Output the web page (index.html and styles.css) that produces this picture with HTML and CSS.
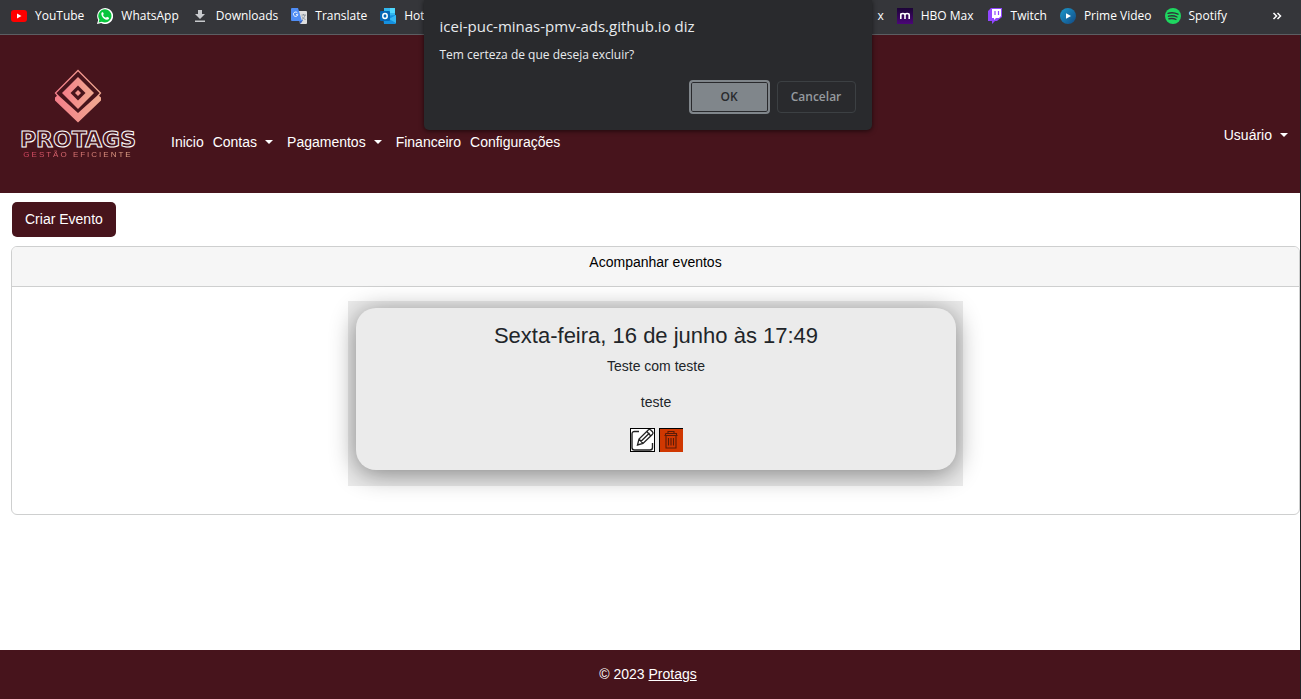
FILE: index.html
```html
<!DOCTYPE html>
<html lang="pt-BR">
<head>
<meta charset="utf-8">
<title>Protags</title>
<link rel="stylesheet" href="styles.css">
</head>
<body>
<div class="bookmarks">
  <div class="bookmark-group">
    <a class="bookmark" href="#"><svg viewBox="0 0 16 16"><rect y="2" width="16" height="12" rx="3" fill="#f00"/><path d="M6 5.500v5L10.500 8z" fill="#fff"/></svg>YouTube</a>
    <a class="bookmark" href="#"><svg viewBox="0 0 16 16"><path d="M0 16l1.200-4A8 8 0 1 1 4.200 15z" fill="#fff"/><path d="M1.600 14.500l.8-2.900A6.600 6.600 0 1 1 4.900 13.800z" fill="#08c53c"/><path d="M5 4.200c-2 1.500.8 7.200 5 7.500 1.300 0 2.300-1 2-2L10 8.700 9 9.800C7.500 9.200 6.600 8.300 6 7l.8-1L6 4.200z" fill="#fff"/></svg>WhatsApp</a>
    <a class="bookmark" href="#"><svg viewBox="0 0 16 16"><path d="M6 2h4v4h3l-5 5-5-5h3zM3 12.500h10V14H3z" fill="#c7c9cc"/></svg>Downloads</a>
    <a class="bookmark" href="#"><svg viewBox="0 0 16 16"><path d="M7 3h8a1 1 0 0 1 1 1v11a1 1 0 0 1-1 1H9z" fill="#dedede"/><path d="M8 12h4l-2.500 4z" fill="#3a62bd"/><path d="M1 0h6l4 13H1a1 1 0 0 1-1-1V1a1 1 0 0 1 1-1z" fill="#4f8df5"/><path d="M6.500 5A2.200 2.200 0 1 0 6.800 6.700H5" fill="none" stroke="#fff"/><path d="M10.500 7h4.500M12.500 6v1M14 7c-.5 2-1.500 3.500-3 4.500M11 8.500c1 1.500 2 2.500 3.500 3" fill="none" stroke="#7b8791" stroke-width=".8"/></svg>Translate</a>
    <a class="bookmark" href="#"><svg viewBox="0 0 16 16"><path d="M4 0h11v8H4z" fill="#32b7ee"/><path d="M10 0h5v5h-5z" fill="#50d9ff"/><path d="M3 8l13-1v8a1 1 0 0 1-1 1H4z" fill="#1490df"/><path d="M16 7v8l-7-4z" fill="#35b8f1"/><rect y="3" width="10" height="10" rx="1" fill="#0567b5"/><ellipse cx="5" cy="8" rx="2.200" ry="2.500" fill="none" stroke="#fff" stroke-width="1.500"/></svg>Hot</a>
  </div>
  <div class="bookmark-group">
    <a class="bookmark" href="#">x</a>
    <a class="bookmark" href="#"><svg viewBox="0 0 16 16"><defs><linearGradient id="hbo" x2="0" y2="1"><stop stop-color="#1c0437"/><stop offset="1" stop-color="#4b0678"/></linearGradient></defs><path d="M0 0h16v16H0z" fill="url(#hbo)"/><path d="M3.800 11V5.500M3.800 7c0-2 4.200-2 4.200 0v4M8 7c0-2 4.200-2 4.200 0v4" fill="none" stroke="#fff" stroke-width="1.600"/></svg>HBO Max</a>
    <a class="bookmark" href="#"><svg viewBox="0 0 16 16"><path d="M4 0h11v9l-5 4H8l-3 3v-3H1V3z" fill="#9146ff"/><path d="M5 1h9v7l-2 2H9l-2 2v-2H5z" fill="#fff"/><path d="M8 3v4M11.500 3v4" stroke="#9146ff" stroke-width="1.200"/></svg>Twitch</a>
    <a class="bookmark" href="#"><svg viewBox="0 0 16 16"><defs><linearGradient id="prime" x2="1" y2="1"><stop stop-color="#1b9ace"/><stop offset="1" stop-color="#134a83"/></linearGradient></defs><circle cx="8" cy="8" r="8" fill="url(#prime)"/><path d="M6 5.200v5.600L11 8z" fill="#fff"/></svg>Prime Video</a>
    <a class="bookmark" href="#"><svg viewBox="0 0 16 16"><circle cx="8" cy="8" r="8" fill="#1ed760"/><path d="M3 5.400q5-1.600 10 .8M3.500 8.200q4.500-1.300 8.500.8M4 10.800q4-1 7 .7" fill="none" stroke="#303438" stroke-width="1.400" stroke-linecap="round"/></svg>Spotify</a>
    <button class="more" type="button" aria-label="Mais favoritos"><svg viewBox="0 0 10 10"><path d="M1.500 2l3 3-3 3M5.500 2l3 3-3 3" fill="none" stroke="#fff" stroke-width="1.500"/></svg></button>
  </div>
</div>

<div class="page">
  <header class="navbar">
    <a class="logo" href="#">
      <svg class="logo-mark" viewBox="0 0 48 54"><defs><linearGradient id="rose" x2="1" y2="0"><stop stop-color="#f47d89"/><stop offset="1" stop-color="#f0aa91"/></linearGradient></defs><path d="M4 27L1.500 24 24 1.500 46.500 24 44 27" fill="none" stroke="url(#rose)" stroke-width="1.300"/><path d="M24 8L40 24 24 40 8 24z" fill="url(#rose)"/><path d="M24 16.500L31.500 24 24 31.500 16.500 24z" fill="#47141c"/><path d="M24 21L27 24 24 27 21 24z" fill="#f2948d"/><path d="M1 28.500l3-2.500 20 18 20-18 3 2.500v3L24 53.500 1 31.500z" fill="url(#rose)"/></svg>
      <span class="logo-name">PROTAGS</span>
      <span class="logo-tag">GESTÃO EFICIENTE</span>
    </a>
    <nav class="menu">
      <a href="#">Inicio</a>
      <button class="dropdown" type="button">Contas</button>
      <button class="dropdown" type="button">Pagamentos</button>
      <a href="#">Financeiro</a>
      <a href="#">Configurações</a>
    </nav>
    <button class="dropdown user" type="button">Usuário</button>
  </header>

  <main class="content">
    <button class="create" type="button">Criar Evento</button>
    <section class="card">
      <h1 class="card-header">Acompanhar eventos</h1>
      <div class="card-body">
        <div class="event-frame">
          <article class="event">
            <h2>Sexta-feira, 16 de junho às 17:49</h2>
            <p>Teste com teste</p>
            <p>teste</p>
            <div class="actions">
              <button class="edit" type="button" aria-label="Editar"><svg viewBox="0 0 23 22"><path d="M8 2.500H3.500Q1 2.500 1 5v13.500Q1 21 3.500 21h15.500q2.500 0 2.500-2.500V14" fill="none" stroke="#222" stroke-width="1.400"/><path d="M6.500 16l1.500-6L17.500.800q1-.8 2.200.2l1.800 1.800q1 1.200 0 2.400L12 14.500zM8 10l4 4.500M15.800 2.500l4 4.500M9.800 12.500L18.500 4" fill="#fff" stroke="#222" stroke-width="1.300"/></svg></button>
              <button class="delete" type="button" aria-label="Excluir"><svg viewBox="0 0 23 23"><path d="M4.500 6.500h13M5.500 4.500h11v2M8 4.500v-2h6v2M6 6.500V19h10V6.500M8.500 9v7.500M11 9v7.500M13.500 9v7.500M5.500 4.500v2" fill="none" stroke="#5b1b08" stroke-width="1.100"/></svg></button>
            </div>
          </article>
        </div>
      </div>
    </section>
  </main>

  <footer class="footer">© 2023&nbsp;<a href="#">Protags</a></footer>
</div>

<div class="dialog" role="alertdialog" aria-labelledby="dialog-title" aria-describedby="dialog-text">
  <h2 id="dialog-title">icei-puc-minas-pmv-ads.github.io diz</h2>
  <p id="dialog-text">Tem certeza de que deseja excluir?</p>
  <div class="dialog-actions">
    <button class="ok" type="button">OK</button>
    <button class="cancel" type="button">Cancelar</button>
  </div>
</div>
</body>
</html>
```

FILE: styles.css
```css
* { box-sizing: border-box; }
body {
  margin: 0;
  min-height: 100vh;
  display: flex;
  flex-direction: column;
  font: 14px/21px "Liberation Sans", Arial, sans-serif;
  color: #212529;
  background: #fff;
}
h1, h2, p { margin: 0; font-weight: 400; }
button { font: inherit; color: inherit; background: none; border: 0; padding: 0; }
a { color: inherit; text-decoration: none; }
svg { display: block; flex: none; }

.bookmarks {
  height: 35px;
  padding: 0 19px 3px 11px;
  display: flex;
  justify-content: space-between;
  background: #35363a;
  border-bottom: 1px solid #5c5e62;
  color: #fff;
  font: 12px/16px "Open Sans", "Noto Sans", sans-serif;
}
.bookmark-group { display: flex; align-items: center; gap: 13px; }
.bookmark { display: flex; align-items: center; gap: 8px; white-space: nowrap; }
.bookmark svg { width: 16px; height: 16px; }
.more { margin-left: 32px; }
.more svg { width: 10px; height: 10px; }

.page {
  flex: 1;
  display: flex;
  flex-direction: column;
  border-right: 1px solid #222326;
}
.navbar {
  min-height: 158px;
  padding: 0 12px 0 21px;
  display: flex;
  align-items: center;
  background: #47141c;
  color: #fff;
}
.logo { display: flex; flex-direction: column; align-items: center; width: 114px; }
.logo-mark { width: 48px; height: 54px; }
.logo-name {
  margin-top: 8px;
  font: bold 22px/18px "DejaVu Sans", sans-serif;
  color: #47141c;
  -webkit-text-stroke: 1px #fff;
}
.logo-tag {
  margin-top: 1px;
  font: 8px/10px "Liberation Sans", sans-serif;
  letter-spacing: 2px;
  white-space: nowrap;
  color: transparent;
  background: linear-gradient(90deg, #d94562, #e8b08f);
  background-clip: text;
  -webkit-background-clip: text;
}
.menu { display: flex; gap: 9px; margin: 56px 0 0 36px; }
.dropdown { display: flex; align-items: center; gap: 8px; }
.dropdown::after {
  content: "";
  border: 4px solid transparent;
  border-top-color: #fff;
  border-bottom: 0;
}
.menu .dropdown { margin-right: 5px; }
.user { margin: 42px 0 0 auto; }

.content { flex: 1; padding: 9px 0 16px 11px; }
.create {
  margin-left: 1px;
  padding: 7px 13px;
  border-radius: 5px;
  background: #47141c;
  color: #fff;
}
.card {
  margin-top: 9px;
  border: 1px solid #cecfcf;
  border-radius: 6px;
}
.card-header {
  padding: 5px 16px 13px;
  border-bottom: 1px solid #cecfcf;
  border-radius: 5px 5px 0 0;
  background: #f6f6f6;
  color: #000;
  font-size: 14px;
  line-height: 21px;
  text-align: center;
}
.card-body { display: flex; justify-content: center; padding: 14px 16px 28px; }
.event-frame { width: 615px; max-width: 100%; padding: 7px 7px 16px 8px; background: #ebebeb; }
.event {
  padding: 16px 16px 18px;
  border-radius: 20px;
  background: #ebebeb;
  box-shadow: 0 4px 26px rgba(0, 0, 0, .45);
  text-align: center;
}
.event h2 { font-size: 22px; line-height: 24px; margin-bottom: 8px; }
.event p { line-height: 21px; margin-bottom: 15px; }
.actions { display: flex; justify-content: center; gap: 4px; }
.edit { width: 25px; height: 24px; background: #fff; border: 1px solid #000; }
.delete { width: 24px; height: 24px; background: #d03801; border: solid #000; border-width: 1px 0 0 1px; }
.actions svg { width: 100%; height: 100%; }

.footer {
  display: flex;
  justify-content: center;
  padding: 14px 4px 14px 0;
  background: #47141c;
  color: #fff;
}
.footer a { text-decoration: underline; }

.dialog {
  position: absolute;
  top: 0;
  left: 50%;
  width: 448px;
  margin-left: -227px;
  padding: 16px;
  border-radius: 0 0 5px 5px;
  background: #292a2d;
  color: #e8eaed;
  box-shadow: 0 1px 5px rgba(0, 0, 0, .6);
  font: 12px/20px "Open Sans", "Noto Sans", sans-serif;
}
.dialog h2 { font-size: 15px; line-height: 20px; }
.dialog p { margin-top: 9px; }
.dialog-actions { display: flex; align-items: center; justify-content: flex-end; gap: 7px; margin-top: 15px; }
.dialog-actions button { font-weight: 600; border-radius: 4px; }
.ok {
  width: 81px;
  height: 34px;
  background: #80868b;
  color: #292a2d;
  border: 2px solid #80868b;
  box-shadow: inset 0 0 0 1px #292a2d;
}
.cancel { width: 79px; height: 32px; border: 1px solid #3c4043; color: #969a9f; }
```
